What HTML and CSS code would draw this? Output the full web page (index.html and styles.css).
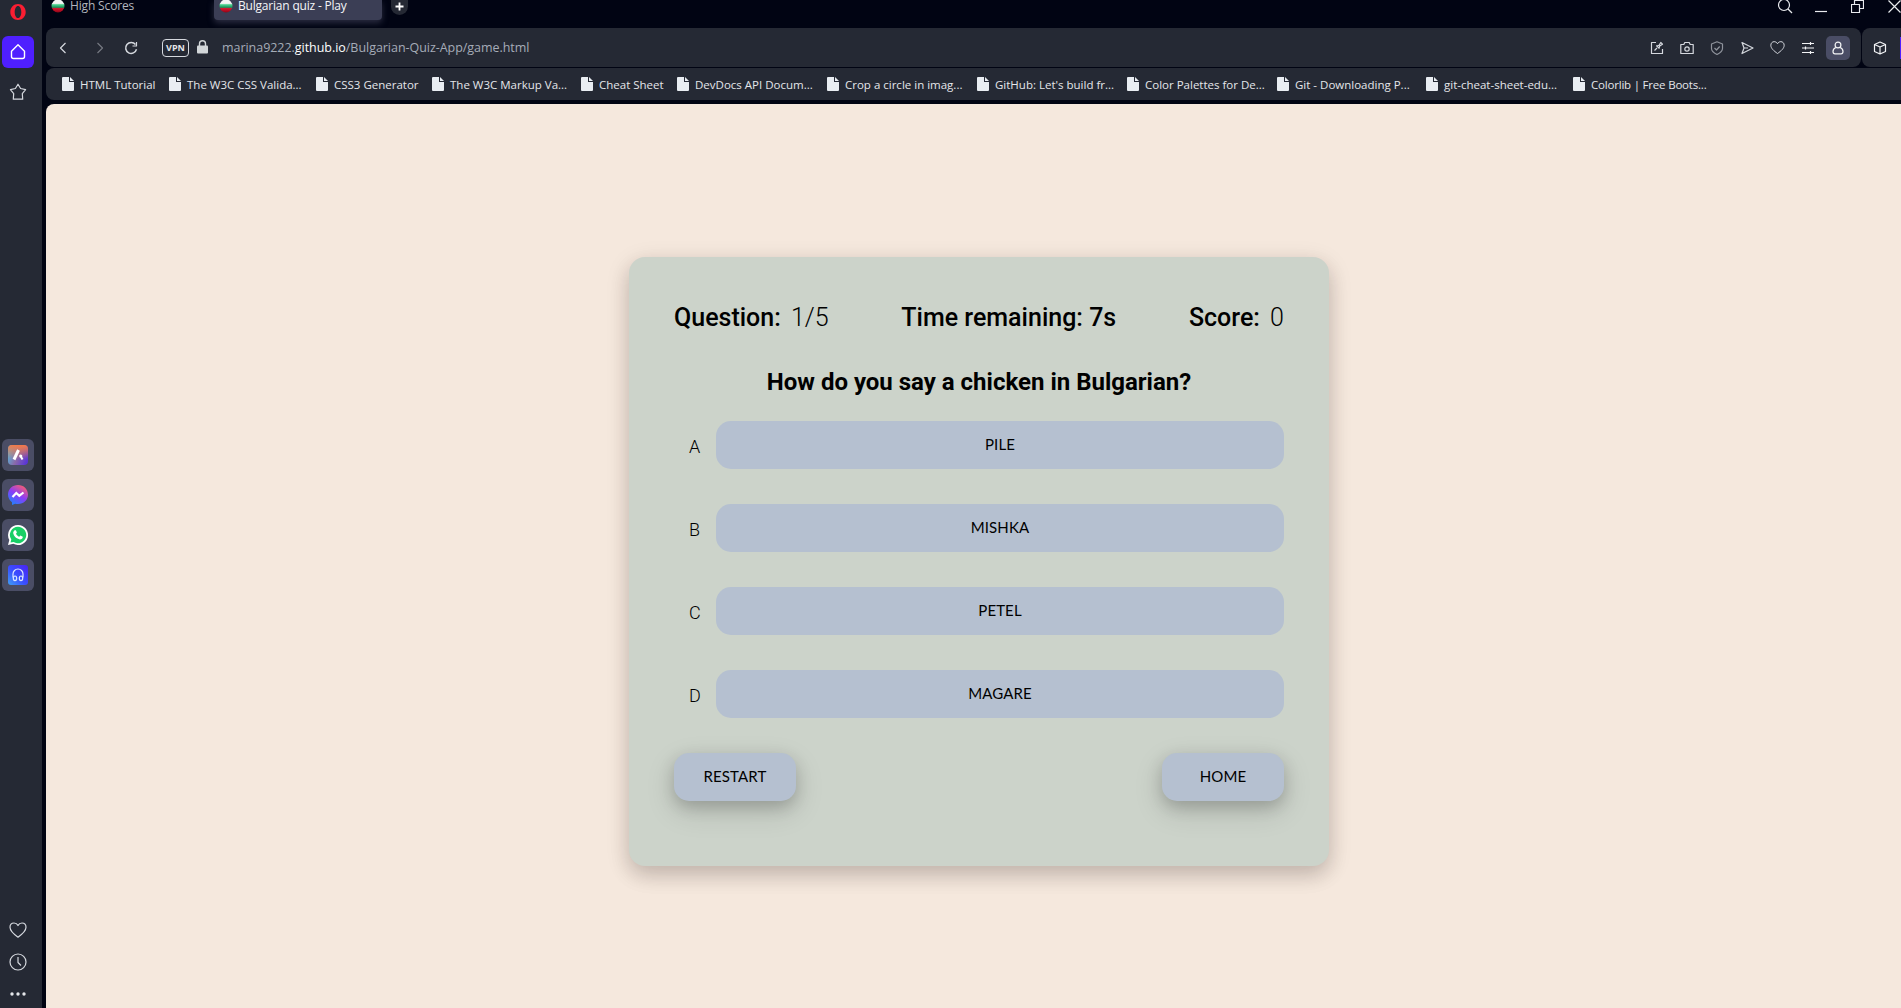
FILE: index.html
```html
<!DOCTYPE html>
<html lang="en">
<head>
<meta charset="utf-8">
<title>Bulgarian quiz - Play</title>
<link rel="stylesheet" href="styles.css">
</head>
<body>
<svg width="0" height="0" class="defs">
  <defs>
    <linearGradient id="flag" x1="0" y1="0" x2="0" y2="1"><stop offset=".3" stop-color="#f4f4f4"/><stop offset=".4" stop-color="#4fd391"/><stop offset=".6" stop-color="#16955c"/><stop offset=".7" stop-color="#d8122c"/><stop offset="1" stop-color="#8d0616"/></linearGradient>
    <linearGradient id="aria" x1="0" y1="0.3" x2="1" y2="0.7"><stop offset="0" stop-color="#55b9dd"/><stop offset=".5" stop-color="#8a6aa8"/><stop offset="1" stop-color="#5a35d8"/></linearGradient>
    <linearGradient id="ariaTop" x1="0" y1="0" x2="0" y2="1"><stop offset="0" stop-color="#f47a48"/><stop offset=".7" stop-color="#f47a48" stop-opacity="0"/></linearGradient>
    <linearGradient id="msg" x1=".2" y1="1" x2=".8" y2="0"><stop offset="0" stop-color="#1a86ff"/><stop offset=".5" stop-color="#8a3cf8"/><stop offset="1" stop-color="#ff6068"/></linearGradient>
    <linearGradient id="player" x1="0" y1="1" x2="1" y2="0"><stop offset="0" stop-color="#3fa0f5"/><stop offset=".45" stop-color="#3a50ff"/><stop offset="1" stop-color="#4a22f5"/></linearGradient>
    <symbol id="file" viewBox="0 0 12 14"><path fill="#e9edf2" d="M1 0h6v5h5v8a1 1 0 0 1-1 1H1a1 1 0 0 1-1-1V1a1 1 0 0 1 1-1zM8 0l4 4H8z"/></symbol>
    <symbol id="heart" viewBox="0 0 18 18"><path d="M9 16.2C4.500 13 1 10 1 6.300 1 3.800 2.700 2 5 2c1.700 0 3.200.900 4 2.500C9.800 2.900 11.300 2 13 2c2.300 0 4 1.800 4 4.300C17 10 13.500 13 9 16.200z"/></symbol>
    <symbol id="bg" viewBox="0 0 14 14"><circle cx="7" cy="7" r="6.500" fill="url(#flag)"/></symbol>
  </defs>
</svg>
<aside class="sidebar">
  <svg class="opera" width="18" height="18" viewBox="0 0 18 18"><path fill="#fa1e32" fill-rule="evenodd" d="M9 1c4.300 0 7.700 3.500 7.700 8S13.300 17 9 17 1.300 13.500 1.300 9 4.700 1 9 1zm0 1.900C7.100 2.900 5.700 5.500 5.700 9s1.400 6.100 3.300 6.100 3.300-2.600 3.300-6.100S10.900 2.900 9 2.900z"/></svg>
  <div class="tile home"><svg class="line" width="18" height="18" viewBox="0 0 18 18"><path d="M2.500 8.200 9 1.800l6.500 6.400v5.300a2 2 0 0 1-2 2h-9a2 2 0 0 1-2-2z"/></svg></div>
  <div class="tile star"><svg class="line" width="18" height="18" viewBox="0 0 18 18"><path d="m9 1.200 2.600 4.300 5 1.200-3.300 3.900.4 5.600H4.300l.4-5.600-3.300-3.900 5-1.200z"/></svg></div>
  <div class="apps">
    <div class="tile app"><svg width="20" height="20" viewBox="0 0 20 20"><rect width="20" height="20" rx="4" fill="url(#aria)"/><rect width="20" height="20" rx="4" fill="url(#ariaTop)"/><path d="M10.500 5 6 14.500" stroke="#fff" stroke-width="3"/><circle cx="12.700" cy="11" r="1.600" fill="#fff"/><path d="m12.800 11.500 1.700 3" stroke="#fff" stroke-width="2"/></svg></div>
    <div class="tile app"><svg width="20" height="20" viewBox="0 0 20 20"><path fill="url(#msg)" d="M10 0c5.700 0 10 4.200 10 9.600s-4.300 9.500-10 9.500c-1 0-2-.1-2.900-.4L4 20v-2.800C1.500 15.500 0 12.800 0 9.600 0 4.200 4.300 0 10 0z"/><path d="m4.500 12 3.800-4 3 2.700 4.200-3.200" fill="none" stroke="#fff" stroke-width="2.200"/></svg></div>
    <div class="tile app"><svg width="20" height="20" viewBox="0 0 20 20"><path fill="#fff" d="M10 0a10 10 0 1 1-4.700 18.800L0 20l1.300-5.100A10 10 0 0 1 10 0z"/><path fill="#18cf66" d="M10 1.800a8.200 8.200 0 1 1-4.400 15.100l-3.100.7.800-3A8.200 8.200 0 0 1 10 1.800z"/><path fill="#fff" d="M6.700 5.200h1.200l1 2.400-.9 1.200c.7 1.400 1.800 2.400 3.200 3l1.200-1.300 2.400 1.200c0 1.800-1.300 2.700-2.900 2.700-3.300-.4-6.300-3.300-6.700-6.300 0-1.300.6-2.300 1.500-2.900z"/></svg></div>
    <div class="tile app"><svg width="20" height="20" viewBox="0 0 20 20"><rect width="20" height="20" rx="3" fill="url(#player)"/><g fill="none" stroke="#dce6ff" stroke-width="1.200"><path d="M5 12.500V9a5 5 0 0 1 10 0v3.500"/><ellipse cx="7" cy="13.300" rx="1.700" ry="2.300"/><ellipse cx="13" cy="13.300" rx="1.700" ry="2.300"/></g></svg></div>
  </div>
  <div class="side-foot">
    <svg class="line" width="18" height="18"><use href="#heart"/></svg>
    <svg class="line" width="18" height="18" viewBox="0 0 18 18"><circle cx="9" cy="9" r="8"/><path d="M9 4v5.500l3 3"/></svg>
    <svg width="18" height="18" viewBox="0 0 18 18" fill="#e4e6ea"><circle cx="3" cy="9" r="1.700"/><circle cx="9" cy="9" r="1.700"/><circle cx="15" cy="9" r="1.700"/></svg>
  </div>
</aside>
<div class="window">
  <header class="tabs">
    <div class="tab"><svg width="14" height="14"><use href="#bg"/></svg><span class="t-high">High Scores</span></div>
    <div class="tab active"><svg width="14" height="14"><use href="#bg"/></svg><span class="t-play">Bulgarian quiz - Play</span></div>
    <div class="new-tab"><svg width="9" height="9" viewBox="0 0 9 9"><path d="M4.500.5v8M.5 4.500h8" stroke="#fff" stroke-width="1.800"/></svg></div>
    <div class="controls">
      <svg class="line" width="16" height="16" viewBox="0 0 16 16"><circle cx="7" cy="7" r="5.500"/><path d="m11 11 4 4"/></svg>
      <svg class="line" width="12" height="16" viewBox="0 0 12 16"><path d="M0 13.500h12"/></svg>
      <svg class="line" width="13" height="16" viewBox="0 0 13 16"><path d="M.5 6.500h8v8h-8zM3.500 6.500v-4h9v8h-4"/></svg>
      <svg class="line" width="13" height="16" viewBox="0 0 13 16"><path d="m.5 2.500 12 12M12.500 2.500l-12 12"/></svg>
    </div>
  </header>
  <div class="toolbar-row">
    <div class="toolbar">
      <svg class="line back" width="8" height="12" viewBox="0 0 8 12"><path d="M6.500 1 1.500 6l5 5"/></svg>
      <svg class="line forward" width="8" height="12" viewBox="0 0 8 12"><path d="m1.500 1 5 5-5 5"/></svg>
      <svg class="line reload" width="14" height="14" viewBox="0 0 14 14"><path d="M12.500 8.300A5.500 5.500 0 1 1 11.500 3.500" stroke-width="1.500"/><path d="M12.500 1v4h-4"/></svg>
      <span class="vpn">VPN</span>
      <svg class="lock" width="11" height="14" viewBox="0 0 11 14"><rect y="5.500" width="11" height="8" rx="1" fill="#d2d6d9"/><path d="M2.500 6V3.800a3 3 0 0 1 6 0V6" fill="none" stroke="#d2d6d9" stroke-width="1.400"/></svg>
      <span class="url">marina9222.<b>github.io</b>/Bulgarian-Quiz-App/game.html</span>
      <div class="actions">
        <svg class="line" width="14" height="14" viewBox="0 0 14 14"><path d="M6 1.500H1.500v11h11V8M4.500 9.500 7 7M6.300 4.500l3.200 3.200M6.800 5l2.200-.7 1.800-2.800 1.700 1.700-2.800 1.800L9 7.200"/></svg>
        <svg class="line" width="14" height="14" viewBox="0 0 14 14"><path d="M.8 3.500h3l1-2h4.400l1 2h3v9H.8z"/><circle cx="7" cy="8" r="2.200"/></svg>
        <svg class="line dim" width="14" height="14" viewBox="0 0 14 14"><path d="M7 .8 12.500 3v4.500c0 2.500-2.500 4.500-5.500 6-3-1.500-5.500-3.500-5.500-6V3zM4.500 7l2 2 3.200-3.500"/></svg>
        <svg class="line" width="14" height="14" viewBox="0 0 14 14"><path d="m2 1.500 11 5.500-11 5.500L4 7zM4 7h4"/></svg>
        <svg class="line" width="15" height="15" viewBox="0 0 18 18"><use href="#heart" width="18" height="18"/></svg>
        <svg class="line bright" width="14" height="14" viewBox="0 0 14 14"><path d="M1 2.500h12M1 7h12M1 11.500h12M9.500 1v3M4.500 5.500v3M9.500 10v3"/></svg>
        <span class="profile"><svg class="line bright" width="14" height="14" viewBox="0 0 14 14"><circle cx="7" cy="4" r="2.900"/><path d="M4.800 6.500C3 7.300 2 8.800 2 10.500 2 12 2.800 12.800 4 12.800h6c1.200 0 2-.8 2-2.300 0-1.700-1-3.200-2.800-4"/></svg></span>
      </div>
    </div>
    <div class="extension">
      <svg class="line bright" width="14" height="14" viewBox="0 0 14 14"><path d="m7 1 5.500 2.500v7L7 13l-5.500-2.500v-7zM1.500 3.500 7 6l5.500-2.500M7 6v7"/></svg>
      <span class="edge"></span>
    </div>
  </div>
  <nav class="bookmarks">
    <a class="b1"><svg width="12" height="14"><use href="#file"/></svg><span>HTML Tutorial</span></a>
    <a class="b2"><svg width="12" height="14"><use href="#file"/></svg><span>The W3C CSS Valida...</span></a>
    <a class="b3"><svg width="12" height="14"><use href="#file"/></svg><span>CSS3 Generator</span></a>
    <a class="b4"><svg width="12" height="14"><use href="#file"/></svg><span>The W3C Markup Va...</span></a>
    <a class="b5"><svg width="12" height="14"><use href="#file"/></svg><span>Cheat Sheet</span></a>
    <a class="b6"><svg width="12" height="14"><use href="#file"/></svg><span>DevDocs API Docum...</span></a>
    <a class="b7"><svg width="12" height="14"><use href="#file"/></svg><span>Crop a circle in imag...</span></a>
    <a class="b8"><svg width="12" height="14"><use href="#file"/></svg><span>GitHub: Let's build fr...</span></a>
    <a class="b9"><svg width="12" height="14"><use href="#file"/></svg><span>Color Palettes for De...</span></a>
    <a class="b10"><svg width="12" height="14"><use href="#file"/></svg><span>Git - Downloading P...</span></a>
    <a class="b11"><svg width="12" height="14"><use href="#file"/></svg><span>git-cheat-sheet-edu...</span></a>
    <a class="b12"><svg width="12" height="14"><use href="#file"/></svg><span>Colorlib | Free Boots...</span></a>
  </nav>
  <main class="page">
    <section class="card">
      <div class="status">
        <div>Question: <span class="value">1/5</span></div>
        <div>Time remaining: 7s</div>
        <div>Score: <span class="value">0</span></div>
      </div>
      <h2>How do you say a chicken in Bulgarian?</h2>
      <div class="choices">
        <div class="choice"><span>A</span><button>PILE</button></div>
        <div class="choice"><span>B</span><button>MISHKA</button></div>
        <div class="choice"><span>C</span><button>PETEL</button></div>
        <div class="choice"><span>D</span><button>MAGARE</button></div>
      </div>
      <div class="links"><button>RESTART</button><button>HOME</button></div>
    </section>
  </main>
</div>
</body>
</html>
```
FILE: styles.css
```css
* { box-sizing: border-box; }
html, body { height: 100%; }
body {
  margin: 0;
  display: flex;
  gap: 4px;
  background: #010413;
  color: #e4e6ea;
  font: 12px "Open Sans", "Noto Sans", sans-serif;
  overflow: hidden;
}
svg { display: block; flex: none; }
.defs { position: absolute; }
.line { fill: none; stroke: #d5d8de; stroke-width: 1.2; stroke-linejoin: round; }
.bright { stroke: #f2f3f5; }
.dim { stroke: #8f939c; }

.sidebar {
  flex: none;
  width: 42px;
  padding: 3px 6px 5px 2px;
  background: #252934;
  display: flex;
  flex-direction: column;
}
.sidebar > svg { margin-left: 7px; }
.tile { width: 32px; height: 32px; display: flex; align-items: center; justify-content: center; border-radius: 6px; }
.home { margin-top: 15px; background: #4f1fff; }
.home .line { stroke: #fff; stroke-width: 1.4; }
.star { margin-top: 8px; }
.apps { margin-top: 331px; display: grid; gap: 8px; }
.app { background: #4a4d65; }
.side-foot { margin-top: auto; padding-left: 7px; display: grid; gap: 14px; }

.window { flex: 1; min-width: 0; display: flex; flex-direction: column; }
.tabs { height: 28px; display: flex; align-items: flex-start; flex: none; }
.tab { height: 20px; width: 168px; padding-left: 6px; display: flex; gap: 5px; color: #b3b6be; line-height: 12px; }
.tab svg { margin-top: -1px; }
.tab:first-child { padding-left: 5px; letter-spacing: -.15px; }
.tab.active { background: #3b3e55; color: #f4f5f8; border-radius: 0 0 4px 4px; box-shadow: 0 3px 6px #2a2c40; padding-left: 5px; letter-spacing: -.2px; }
.new-tab { margin-left: 9px; width: 17px; height: 15px; background: #252934; border-radius: 0 0 9px 9px; display: flex; justify-content: center; padding-top: 2px; }
.controls { margin-left: auto; display: flex; gap: 24px; margin-top: -2px; }
.controls svg:first-child { margin-right: -2px; }
.controls .line { stroke: #e9ebee; }

.toolbar-row { height: 39px; flex: none; display: flex; gap: 1px; }
.toolbar { flex: 1; background: #252934; border-radius: 8px; display: flex; align-items: center; }
.back { margin-left: 13px; }
.forward { margin-left: 29px; opacity: .45; }
.reload { margin-left: 20px; }
.vpn { margin-left: 24px; width: 27px; height: 18px; border: 1.500px solid #d5d8de; border-radius: 4px; font-size: 9px; font-weight: 700; line-height: 16px; text-align: center; }
.lock { margin-left: 8px; margin-top: -2px; }
.url { margin-left: 14px; font-size: 12.500px; letter-spacing: -.04px; color: #a5acb8; white-space: nowrap; }
.url b { font-weight: 400; color: #fff; }
.actions { margin-left: auto; margin-right: 11px; display: flex; align-items: center; gap: 16px; }
.profile { width: 24px; height: 24px; margin-left: -5px; border-radius: 5px; background: #4a4d65; display: flex; align-items: center; justify-content: center; }
.extension { width: 39px; background: #252934; border-radius: 8px 0 0 8px; display: flex; align-items: center; justify-content: space-between; padding-left: 11px; }
.edge { width: 1px; height: 22px; background: #4f1fff; }

.bookmarks { height: 32px; flex: none; margin: 1px 0 4px; padding-left: 16px; border-radius: 8px 0 0 8px; background: #252934; display: flex; align-items: center; }
.bookmarks a { display: flex; align-items: center; gap: 6px; white-space: nowrap; font-size: 11.500px; flex: none; }
.b1 { width: 107px; }
.b2 { width: 147px; }
.b3 { width: 116px; }
.b4 { width: 149px; }
.b5 { width: 96px; }
.b6, .b7, .b8, .b9 { width: 150px; }
.b10 { width: 149px; }
.b11 { width: 147px; }
.b12 { width: 150px; letter-spacing: -.2px; }

.page { flex: 1; background: #f5e8dd; border-radius: 8px 0 0; padding: 153px 0 0 583px; color: #000; font-family: Roboto, sans-serif; }
.card { width: 700px; height: 609px; padding: 46px 45px 45px; border-radius: 16px; background: #ccd3ca; box-shadow: 0 10px 20px rgba(0, 0, 0, .12), 0 6px 24px rgba(40, 10, 0, .14); }
.status { display: flex; justify-content: space-between; font-size: 25px; font-weight: 500; line-height: 30px; }
.value { font-weight: 300; margin-left: 4px; }
h2 { margin: 35px 0 0; text-align: center; font-size: 24px; line-height: 28px; font-weight: 700; }
.choices { margin-top: 25px; display: grid; gap: 35px; }
.choice { height: 48px; display: flex; justify-content: space-between; }
.choice span { padding: 15px 0 0 15px; font-size: 18px; line-height: 22px; font-weight: 300; }
button { height: 48px; border: 0; padding: 0 0 2px; border-radius: 15px; background: #b5c0d0; color: #000; font: 15px/46px Lato, sans-serif; letter-spacing: .1px; }
.choice button { width: 568px; }
.links { margin-top: 35px; display: flex; justify-content: space-between; }
.links button { width: 122px; box-shadow: 0 10px 30px rgba(0, 0, 0, .14), 0 6px 16px rgba(0, 0, 0, .17); }
```
